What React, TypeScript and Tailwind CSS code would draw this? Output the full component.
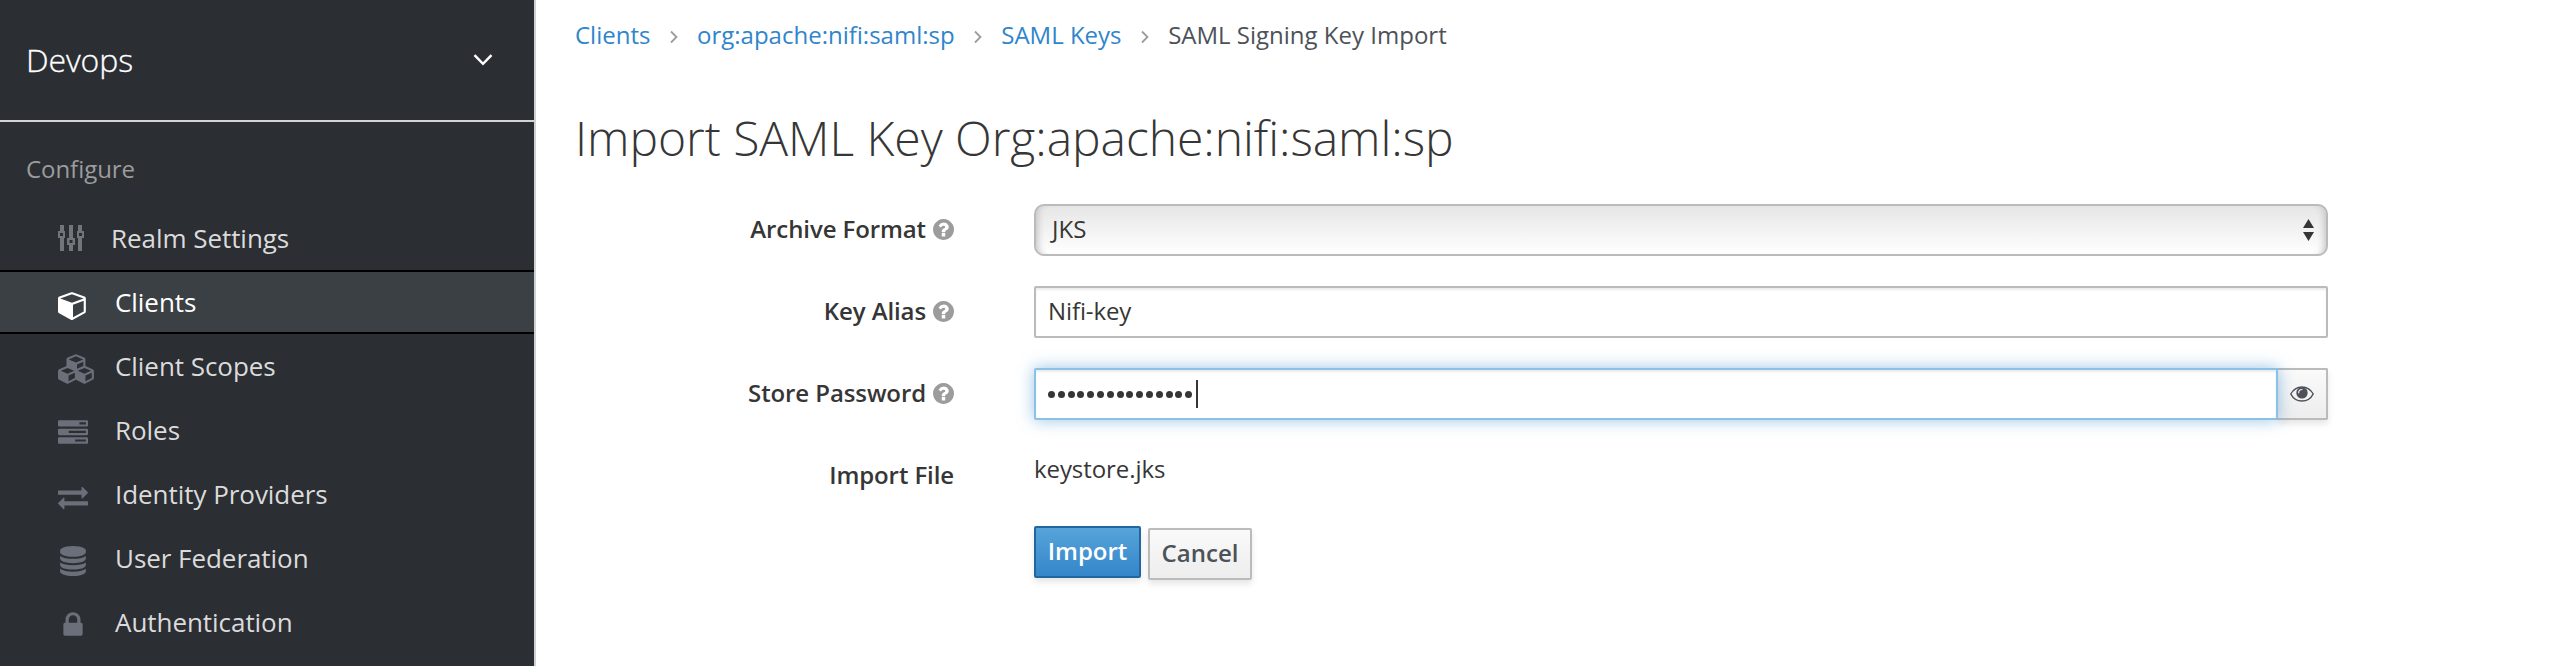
import React from "react";

type IconProps = { className?: string };

const Sliders = ({ className }: IconProps) => (
  <svg viewBox="0 0 26 26" className={className} fill="currentColor">
    <path d="M2 0h4v6h1v7h-1v13h-4V13H0V6h2zM2 8v3h3V8zM11 0h4v13h2v7h-2v6h-4v-6H9v-7h2zM11.500 15v3h3v-3zM20 0h4v6h2v7h-2v13h-4V13h-1V6h1zM21 8v3h3V8z" fillRule="evenodd" />
  </svg>
);
const Cube = ({ className }: IconProps) => (
  <svg viewBox="0 0 1792 1792" className={className} fill="currentColor">
    <path d="M896 1629l640-349v-636l-640 233v752zm-64-865l698-254-698-254-698 254zm832-252v768q0 35-18 65t-49 47l-704 384q-28 16-61 16t-61-16l-704-384q-31-17-49-47t-18-65v-768q0-40 23-73t61-47l704-256q22-8 44-8t44 8l704 256q38 14 61 47t23 73z" />
  </svg>
);
const Cubes = ({ className }: IconProps) => (
  <svg viewBox="0 0 2304 1792" className={className} fill="currentColor">
    <path d="M640 1632l384-192v-314l-384 164v342zm-64-454l404-173-404-173-404 173zm1088 454l384-192v-314l-384 164v342zm-64-454l404-173-404-173-404 173zm-448-293l384-165v-266l-384 164v267zm-64-379l441-189-441-189-441 189zm1088 518v416q0 36-19 67t-52 47l-448 224q-25 14-57 14t-57-14l-448-224q-4-2-7-4-2 2-7 4l-448 224q-25 14-57 14t-57-14l-448-224q-33-16-52-47t-19-67v-416q0-38 21.500-70t56.500-48l434-186v-400q0-38 21.500-70t56.500-48l448-192q23-10 50-10t50 10l448 192q35 16 56.500 48t21.500 70v400l434 186q36 16 57 48t21 70z" />
  </svg>
);
const Tasks = ({ className }: IconProps) => (
  <svg viewBox="0 0 1792 1792" className={className} fill="currentColor">
    <path d="M1024 1408h640v-128h-640v128zm-384-512h1024v-128h-1024v128zm640-512h384v-128h-384v128zm512 832v256q0 26-19 45t-45 19h-1664q-26 0-45-19t-19-45v-256q0-26 19-45t45-19h1664q26 0 45 19t19 45zm0-512v256q0 26-19 45t-45 19h-1664q-26 0-45-19t-19-45v-256q0-26 19-45t45-19h1664q26 0 45 19t19 45zm0-512v256q0 26-19 45t-45 19h-1664q-26 0-45-19t-19-45v-256q0-26 19-45t45-19h1664q26 0 45 19t19 45z" />
  </svg>
);
const Exchange = ({ className }: IconProps) => (
  <svg viewBox="0 0 1792 1792" className={className} fill="currentColor">
    <path d="M1792 1184v192q0 13-9.500 22.500t-22.500 9.500h-1376v192q0 13-9.500 22.500t-22.500 9.500q-12 0-24-10l-319-320q-9-9-9-22 0-14 9-23l320-320q9-9 23-9 13 0 22.500 9.500t9.500 22.500v192h1376q13 0 22.500 9.500t9.500 22.500zm0-544q0 14-9 23l-320 320q-9 9-23 9-13 0-22.500-9.500t-9.500-22.500v-192h-1376q-13 0-22.500-9.500t-9.500-22.500v-192q0-13 9.500-22.500t22.500-9.500h1376v-192q0-14 9-23t23-9q12 0 24 10l319 319q9 9 9 23z" />
  </svg>
);
const Database = ({ className }: IconProps) => (
  <svg viewBox="0 0 1792 1792" className={className} fill="currentColor">
    <path d="M896 768q237 0 443-43t325-127v170q0 69-103 128t-280 93.500-385 34.500-385-34.500-280-93.500-103-128v-170q119 84 325 127t443 43zm0 768q237 0 443-43t325-127v170q0 69-103 128t-280 93.500-385 34.500-385-34.500-280-93.500-103-128v-170q119 84 325 127t443 43zm0-384q237 0 443-43t325-127v170q0 69-103 128t-280 93.500-385 34.500-385-34.500-280-93.500-103-128v-170q119 84 325 127t443 43zm0-1152q208 0 385 34.500t280 93.500 103 128v128q0 69-103 128t-280 93.500-385 34.500-385-34.500-280-93.500-103-128v-128q0-69 103-128t280-93.500 385-34.500z" />
  </svg>
);
const Lock = ({ className }: IconProps) => (
  <svg viewBox="0 0 1792 1792" className={className} fill="currentColor">
    <path d="M640 768h512v-192q0-106-75-181t-181-75-181 75-75 181v192zm832 96v576q0 40-28 68t-68 28h-960q-40 0-68-28t-28-68v-576q0-40 28-68t68-28h32v-192q0-184 132-316t316-132 316 132 132 316v192h32q40 0 68 28t28 68z" />
  </svg>
);
const Help = () => (
  <svg viewBox="128 128 1536 1536" className="size-[21px] text-[#9c9c9c]" fill="currentColor">
    <path d="M1024 1376v-192q0-14-9-23t-23-9h-192q-14 0-23 9t-9 23v192q0 14 9 23t23 9h192q14 0 23-9t9-23zm256-672q0-88-55.500-163t-138.500-116-170-41q-243 0-371 213-15 24 8 42l132 100q7 6 19 6 16 0 25-12 53-68 86-92 34-24 86-24 48 0 85.500 26t37.500 59q0 38-20 61t-68 45q-63 28-115.500 86.500t-52.500 125.500v36q0 14 9 23t23 9h192q14 0 23-9t9-23q0-19 21.500-49.500t54.500-49.500q32-18 49-28.500t46-35 44.500-48 28-60.500 12.500-81zm384 192q0 209-103 385.500t-279.500 279.500-385.500 103-385.500-103-279.500-279.500-103-385.500 103-385.500 279.500-279.500 385.500-103 385.500 103 279.500 279.500 103 385.500z" />
  </svg>
);
const Eye = () => (
  <svg viewBox="0 0 24 16" className="h-4 w-6" fill="none">
    <path d="M.8 8C3 3.800 7 .9 12 .9S21 3.800 23.200 8C21 12.200 17 15.100 12 15.100S3 12.200.8 8z" stroke="#4d5258" strokeWidth="1.500" />
    <circle cx="12" cy="6.900" r="5.700" fill="#4d5258" />
    <path d="M8.700 6.800c0-2 1.300-3.300 3.300-3.300" stroke="#f4f4f4" strokeWidth="1.200" strokeLinecap="round" />
  </svg>
);
const Angle = () => (
  <svg viewBox="0 0 8 14" className="mx-[19.300px] mt-[4px] h-[14px] w-2" fill="none">
    <path d="M1 1.500L6.500 7L1 12.500" stroke="#9c9c9c" strokeWidth="1.800" />
  </svg>
);

const items = [
  { label: "Client Scopes", icon: <Cubes className="h-[30px] w-[38px]" /> },
  { label: "Roles", icon: <Tasks className="size-[30px]" /> },
  { label: "Identity Providers", icon: <Exchange className="size-[30px]" /> },
  { label: "User Federation", icon: <Database className="size-[30px]" /> },
  { label: "Authentication", icon: <Lock className="size-[30px]" /> },
];

function Row({ label, help, children }: { label: string; help?: boolean; children: React.ReactNode }) {
  return (
    <div className="flex h-[52px] items-center">
      <div className="mr-[80px] flex w-[379px] shrink-0 items-center justify-end gap-[7px] pb-[2px] text-[24px] font-semibold tracking-[-0.1px]">
        <span>{label}</span>
        {help && <Help />}
      </div>
      {children}
    </div>
  );
}

export default function App() {
  return (
    <div className="flex h-[666px] w-[2568px] overflow-hidden bg-white font-['Open_Sans',sans-serif] whitespace-nowrap text-[#363636]">
      <aside className="h-full w-[536px] shrink-0 border-r-2 border-[#d1d1d1] bg-[#2b2e33]">
        <div className="flex h-[122px] items-center justify-between border-b-2 border-[#d4d4d4] pr-[41px] pl-[26px] text-white">
          <span className="text-[32px] font-light tracking-[-0.1px] [-webkit-text-stroke:0.300px_white]">Devops</span>
          <svg viewBox="0 0 20 12" className="h-3 w-5" fill="none">
            <path d="M1.500 1.200L10 9.800L18.500 1.200" stroke="currentColor" strokeWidth="2.500" />
          </svg>
        </div>
        <div className="flex h-[86px] items-center pt-[8px] pl-[26px] text-[24px] tracking-[-0.050px] text-[#9c9c9c]">Configure</div>
        <nav className="text-[26px] tracking-[-0.050px] text-[#dbdbdb]">
          <a className="flex h-[62px] items-center pb-[2px] pl-[58px]">
            <Sliders className="mr-[27px] size-[26px] text-[#72767b]" />
            <span>Realm Settings</span>
          </a>
          <a className="flex h-16 items-center border-y-2 border-black bg-[#3b4045] pl-[58px] text-white">
            <span className="flex w-[57px] pt-[6px]"><Cube className="size-[30px]" /></span>
            <span>Clients</span>
          </a>
          {items.map((it) => (
            <a key={it.label} className="flex h-16 items-center pl-[58px]">
              <span className="flex w-[57px] pt-[6px] text-[#6b6f79]">{it.icon}</span>
              <span>{it.label}</span>
            </a>
          ))}
        </nav>
      </aside>
      <main className="flex-1 pl-[39px]">
        <div className="flex h-[70px] items-center text-[24px] text-[#3085cb]">
          <a>Clients</a><Angle /><a>org:apache:nifi:saml:sp</a><Angle /><a>SAML Keys</a><Angle />
          <span className="text-[#4d5258]">SAML Signing Key Import</span>
        </div>
        <h1 className="flex h-[134px] items-center pt-[2px] text-[48px] font-light tracking-[-0.040px]">Import SAML Key Org:apache:nifi:saml:sp</h1>
        <form className="flex flex-col gap-[30px]">
          <Row label="Archive Format" help>
            <div className="flex h-[52px] w-[1294px] items-center justify-between rounded-[10px] border-2 border-[#bbb] bg-linear-to-b from-[#e6e6e6] to-white pr-[12px] pl-4 text-[24px] shadow-[inset_8px_0_7px_-6px_#c4c4c4,inset_-8px_0_7px_-6px_#c4c4c4]">
              <span className="pb-[2px]">JKS</span>
              <svg viewBox="0 0 11 22" className="h-[22px] w-[11px]" fill="#363636">
                <path d="M5.500 0L11 9H0zM5.500 22L0 13h11z" />
              </svg>
            </div>
          </Row>
          <Row label="Key Alias" help>
            <div className="flex h-[52px] w-[1294px] items-center rounded-[2px] border-2 border-[#bbb] pb-[2px] pl-3 text-[24px] tracking-[-0.100px] shadow-[inset_0_2px_2px_rgba(0,0,0,0.075)]">Nifi-key</div>
          </Row>
          <Row label="Store Password" help>
            <div className="flex w-[1294px]">
              <div className="z-10 flex h-[52px] w-[1244px] items-center rounded-l-[2px] border-2 border-[#8bc1e6] bg-white pl-3 shadow-[inset_0_2px_2px_rgba(0,0,0,0.075),0_0_16px_rgba(48,133,203,0.5)]">
                <span className="flex gap-[2.800px]">
                  {Array.from({ length: 15 }, (_, i) => <i key={i} className="size-[7px] rounded-full bg-[#363636]" />)}
                </span>
                <span className="ml-1 h-7 w-[2px] bg-[#363636]" />
              </div>
              <div className="flex h-[52px] w-[50px] items-center justify-center rounded-r-[2px] border-y-2 border-r-2 border-[#bbb] bg-linear-to-b from-[#fafafa] to-[#ededed] shadow-[0_4px_6px_rgba(3,3,3,0.1)]"><Eye /></div>
            </div>
          </Row>
          <Row label="Import File">
            <span className="pb-[14px] text-[24px] tracking-[-0.080px]">keystore.jks</span>
          </Row>
        </form>
        <div className="mt-[24px] ml-[459px] flex gap-[7px] text-[24px] font-semibold">
          <button className="h-[52px] w-[107px] rounded-[2px] border-2 border-[#21669d] bg-linear-to-b from-[#57a4da] to-[#3486c9] pb-[3px] text-white shadow-[0_4px_6px_rgba(3,3,3,0.1)]">Import</button>
          <button className="mt-[2px] h-[52px] w-[104px] rounded-[2px] border-2 border-[#bbb] bg-linear-to-b from-[#fafafa] to-[#ededed] pb-[2px] text-[#4d5258] shadow-[0_4px_6px_rgba(3,3,3,0.1)]">Cancel</button>
        </div>
      </main>
    </div>
  );
}
